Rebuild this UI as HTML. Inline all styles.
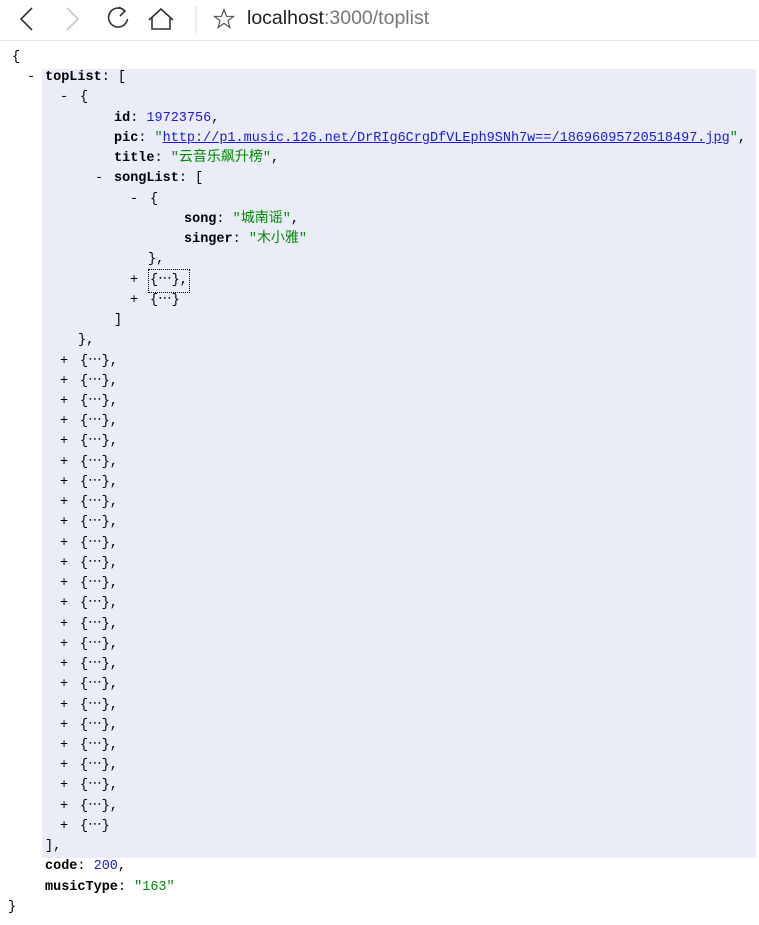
<!DOCTYPE html>
<html><head><meta charset="utf-8"><style>
body{margin:0;width:759px;height:925px;background:#fff;overflow:hidden;position:relative;font-family:"Liberation Mono","Noto Sans CJK SC",monospace;font-size:13.5px;color:#000}
.bar{position:absolute;left:0;top:0;width:759px;height:40px;border-bottom:1px solid #e6e6e6;background:#fff}
.url{position:absolute;left:247px;top:7px;font-family:"Liberation Sans",sans-serif;font-size:19.5px;color:#222}
.url span{color:#777}
.hl{position:absolute;left:42px;top:69px;width:714px;height:789px;background:#eaecf7}
#c{position:absolute;left:0;top:48px;width:759px}
.l{position:relative;height:20.24px;line-height:20.24px;white-space:pre}
.l i{position:absolute;font-style:normal;top:0}
b{font-weight:bold}
.n{color:#1a1ae0}.s{color:#008a00}
a{color:#1a1ae0;text-decoration:underline}
.cjk{font-family:"Noto Sans CJK SC",sans-serif;font-size:14px;line-height:14px}
.box{outline:1px dotted #000;outline-offset:1px}
</style></head><body>
<div class="bar">
<svg width="200" height="40" style="position:absolute;left:0;top:0" fill="none" stroke-width="1.6">
<path d="M32 8 L21 19 L32 30" stroke="#333"/>
<path d="M67 8 L78 19 L67 30" stroke="#c8c8c8"/>
<path d="M125 11 A9.5 9.5 0 1 0 127.5 19" stroke="#333"/><path d="M119 7 L125 11 L120 16" stroke="#333"/>
<path d="M149 20 L161 9 L173 20 M152 17 V29 H170 V17" stroke="#333"/>
<line x1="196" y1="6" x2="196" y2="33" stroke="#e6e6e6"/>
</svg>
<svg width="24" height="24" style="position:absolute;left:212px;top:7px"><path d="M12 2.5 L14.5 9.3 L21.5 9.4 L16 13.7 L17.9 20.5 L12 16.4 L6.1 20.5 L8 13.7 L2.5 9.4 L9.5 9.3 Z" fill="none" stroke="#555" stroke-width="1.2"/></svg>
<div class="url">localhost<span>:3000/toplist</span></div>
</div>
<div class="hl"></div>
<div id="c">
<div class="l"><i style="left:12px">{</i></div>
<div class="l"><i style="left:27px">-</i><i style="left:45px"><b>topList</b>: [</i></div>
<div class="l"><i style="left:60px">-</i><i style="left:80px">{</i></div>
<div class="l"><i style="left:114px"><b>id</b>: <span class="n">19723756</span>,</i></div>
<div class="l"><i style="left:114px"><b>pic</b>: <span class="s">"<a>http://p1.music.126.net/DrRIg6CrgDfVLEph9SNh7w==/18696095720518497.jpg</a>"</span>,</i></div>
<div class="l"><i style="left:114px"><b>title</b>: <span class="s">"<span class="cjk">云音乐飙升榜</span>"</span>,</i></div>
<div class="l"><i style="left:95px">-</i><i style="left:114px"><b>songList</b>: [</i></div>
<div class="l"><i style="left:130px">-</i><i style="left:150px">{</i></div>
<div class="l"><i style="left:184px"><b>song</b>: <span class="s">"<span class="cjk">城南谣</span>"</span>,</i></div>
<div class="l"><i style="left:184px"><b>singer</b>: <span class="s">"<span class="cjk">木小雅</span>"</span></i></div>
<div class="l"><i style="left:148px">},</i></div>
<div class="l"><i style="left:130px">+</i><i style="left:150px" class="box">{⋯},</i></div>
<div class="l"><i style="left:130px">+</i><i style="left:150px">{⋯}</i></div>
<div class="l"><i style="left:114px">]</i></div>
<div class="l"><i style="left:78px">},</i></div>
<div class="l"><i style="left:60px">+</i><i style="left:80px">{⋯},</i></div>
<div class="l"><i style="left:60px">+</i><i style="left:80px">{⋯},</i></div>
<div class="l"><i style="left:60px">+</i><i style="left:80px">{⋯},</i></div>
<div class="l"><i style="left:60px">+</i><i style="left:80px">{⋯},</i></div>
<div class="l"><i style="left:60px">+</i><i style="left:80px">{⋯},</i></div>
<div class="l"><i style="left:60px">+</i><i style="left:80px">{⋯},</i></div>
<div class="l"><i style="left:60px">+</i><i style="left:80px">{⋯},</i></div>
<div class="l"><i style="left:60px">+</i><i style="left:80px">{⋯},</i></div>
<div class="l"><i style="left:60px">+</i><i style="left:80px">{⋯},</i></div>
<div class="l"><i style="left:60px">+</i><i style="left:80px">{⋯},</i></div>
<div class="l"><i style="left:60px">+</i><i style="left:80px">{⋯},</i></div>
<div class="l"><i style="left:60px">+</i><i style="left:80px">{⋯},</i></div>
<div class="l"><i style="left:60px">+</i><i style="left:80px">{⋯},</i></div>
<div class="l"><i style="left:60px">+</i><i style="left:80px">{⋯},</i></div>
<div class="l"><i style="left:60px">+</i><i style="left:80px">{⋯},</i></div>
<div class="l"><i style="left:60px">+</i><i style="left:80px">{⋯},</i></div>
<div class="l"><i style="left:60px">+</i><i style="left:80px">{⋯},</i></div>
<div class="l"><i style="left:60px">+</i><i style="left:80px">{⋯},</i></div>
<div class="l"><i style="left:60px">+</i><i style="left:80px">{⋯},</i></div>
<div class="l"><i style="left:60px">+</i><i style="left:80px">{⋯},</i></div>
<div class="l"><i style="left:60px">+</i><i style="left:80px">{⋯},</i></div>
<div class="l"><i style="left:60px">+</i><i style="left:80px">{⋯},</i></div>
<div class="l"><i style="left:60px">+</i><i style="left:80px">{⋯},</i></div>
<div class="l"><i style="left:60px">+</i><i style="left:80px">{⋯}</i></div>
<div class="l"><i style="left:45px">],</i></div>
<div class="l"><i style="left:45px"><b>code</b>: <span class="n">200</span>,</i></div>
<div class="l"><i style="left:45px"><b>musicType</b>: <span class="s">"163"</span></i></div>
<div class="l"><i style="left:8px">}</i></div>
</div>
</body></html>
